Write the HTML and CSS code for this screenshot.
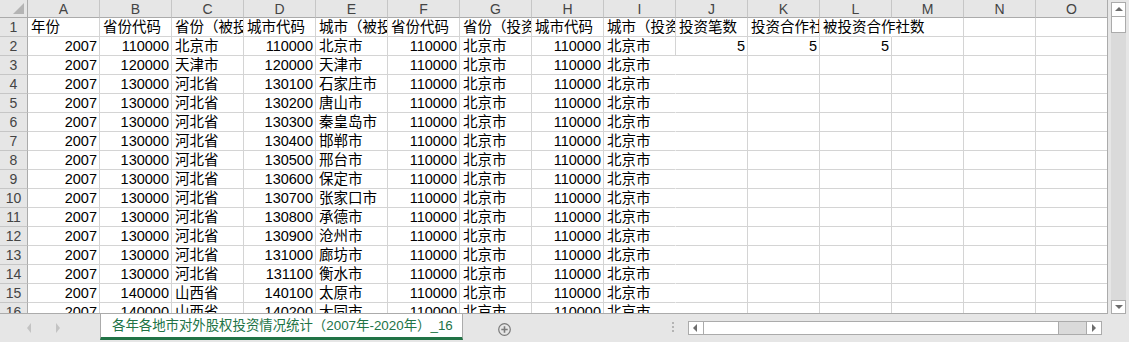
FILE: index.html
```html
<!DOCTYPE html>
<html lang="zh">
<head>
    <meta charset="UTF-8">
    <title>各年各地市对外股权投资情况统计</title>
    <link rel="stylesheet" href="styles.css">
</head>
<body>

<div class="main">
    <div class="sheet">
        <div class="row head">
            <div class="corner"><i></i></div>
        </div>
    </div>

    <div class="vscroll">
        <div class="btn up"><i></i></div>
        <div class="thumb"></div>
        <div class="track"></div>
        <div class="btn down"><i></i></div>
    </div>
</div>

<div class="bar">
    <div class="nav">
        <i class="prev"></i>
        <i class="next"></i>
    </div>
    <div class="tab">各年各地市对外股权投资情况统计（2007年-2020年）_16</div>
    <div class="add">
        <svg width="13" height="13" viewBox="0 0 13 13">
            <circle cx="6.5" cy="6.5" r="5.8" fill="none" stroke="#7a7a7a" stroke-width="1.2"/>
            <path d="M6.5 3.3v6.4M3.3 6.5h6.4" stroke="#7a7a7a" stroke-width="1.6"/>
        </svg>
    </div>
    <div class="dots"><i></i><i></i><i></i></div>
    <div class="hscroll">
        <div class="btn left"><i></i></div>
        <div class="hthumb"></div>
        <div class="htrack"></div>
        <div class="btn right"><i></i></div>
    </div>
</div>

<script>
    // 表头
    var letters = "ABCDEFGHIJKLMNO".split("");
    var titles = ["年份", "省份代码", "省份（被投资）", "城市代码", "城市（被投资）", "省份代码",
        "省份（投资）", "城市代码", "城市（投资）", "投资笔数", "投资合作社数", "被投资合作社数"];

    // 数据
    var data = [
        [2007, 110000, "北京市", 110000, "北京市", 110000, "北京市", 110000, "北京市", 5, 5, 5],
        [2007, 120000, "天津市", 120000, "天津市"],
        [2007, 130000, "河北省", 130100, "石家庄市"],
        [2007, 130000, "河北省", 130200, "唐山市"],
        [2007, 130000, "河北省", 130300, "秦皇岛市"],
        [2007, 130000, "河北省", 130400, "邯郸市"],
        [2007, 130000, "河北省", 130500, "邢台市"],
        [2007, 130000, "河北省", 130600, "保定市"],
        [2007, 130000, "河北省", 130700, "张家口市"],
        [2007, 130000, "河北省", 130800, "承德市"],
        [2007, 130000, "河北省", 130900, "沧州市"],
        [2007, 130000, "河北省", 131000, "廊坊市"],
        [2007, 130000, "河北省", 131100, "衡水市"],
        [2007, 140000, "山西省", 140100, "太原市"],
        [2007, 140000, "山西省", 140200, "大同市"]
    ];
    // 投资方都是北京
    for (var k = 1; k < data.length; k++) {
        data[k].push(110000, "北京市", 110000, "北京市");
    }

    var sheet = document.querySelector(".sheet");
    var head = document.querySelector(".row.head");

    letters.forEach(function (value) {
        var h = document.createElement("div");
        h.className = "col";
        h.textContent = value;
        head.appendChild(h);
    });

    var addRow = function (num, values) {
        var row = document.createElement("div");
        row.className = "row";
        var n = document.createElement("div");
        n.className = "num";
        n.textContent = num;
        row.appendChild(n);
        for (var i = 0; i < letters.length; i++) {
            var c = document.createElement("div");
            var v = values[i];
            c.className = "cell";
            if (typeof v === "number") {
                c.className += " right";
                c.textContent = v;
            } else if (v) {
                c.textContent = v;
                // 右边为空时文字溢出
                if (values[i + 1] === undefined) c.className += " spill";
            }
            row.appendChild(c);
        }
        sheet.appendChild(row);
    };

    addRow(1, titles);
    data.forEach(function (value, index) {
        addRow(index + 2, value);
    });
</script>

</body>
</html>
```

FILE: styles.css
```css
* {
    padding: 0;
    margin: 0;
    box-sizing: border-box;
}
body {
    width: 1129px;
    height: 342px;
    overflow: hidden;
    background: #e6e6e6;
    font-family: "Liberation Sans", "Noto Sans CJK SC", sans-serif;
}
.main {
    height: 314px;
    display: flex;
}
.sheet {
    width: 1108px;
    height: 314px;
    overflow: hidden;
    background: #fff;
    border-right: 1px solid #ababab;
    border-bottom: 1px solid #ababab;
}
.row {
    display: flex;
    height: 19px;
}
.row.head {
    height: 18px;
    background: #e6e6e6;
}
.corner {
    width: 28px;
    flex: none;
    position: relative;
    border-right: 1px solid #ababab;
    border-bottom: 1px solid #ababab;
}
.corner i {
    position: absolute;
    right: 3px;
    bottom: 3px;
    width: 0;
    height: 0;
    border-left: 11px solid transparent;
    border-bottom: 11px solid #b4b4b4;
}
.col {
    width: 72px;
    flex: none;
    text-align: center;
    font-size: 14px;
    line-height: 18px;
    color: #444;
    border-right: 1px solid #c6c6c6;
    border-bottom: 1px solid #ababab;
}
.num {
    width: 28px;
    flex: none;
    text-align: center;
    font-size: 14px;
    line-height: 19px;
    color: #444;
    background: #e6e6e6;
    border-right: 1px solid #ababab;
    border-bottom: 1px solid #c6c6c6;
}
.cell {
    width: 72px;
    flex: none;
    height: 19px;
    padding: 0 2px 0 3px;
    overflow: hidden;
    white-space: nowrap;
    font-size: 14.5px;
    line-height: 19px;
    color: #000;
    border-right: 1px solid #d4d4d4;
    border-bottom: 1px solid #d4d4d4;
}
.cell.right {
    text-align: right;
}
.cell.spill {
    overflow: visible;
    border-right-color: transparent;
}

/* 竖向滚动条 */
.vscroll {
    width: 21px;
    padding: 2px 3px 0 3px;
    display: flex;
    flex-direction: column;
}
.vscroll .btn {
    height: 15px;
    background: #fff;
    border: 1px solid #ababab;
    position: relative;
}
.vscroll .thumb {
    height: 16px;
    background: #fff;
    border: 1px solid #ababab;
    border-top: none;
}
.vscroll .track {
    flex: 1;
    background: #dadada;
}
.vscroll .down {
    height: 14px;
}
.btn i {
    position: absolute;
    width: 0;
    height: 0;
}
.up i {
    left: 3px;
    top: 4px;
    border-left: 4px solid transparent;
    border-right: 4px solid transparent;
    border-bottom: 4px solid #6d6d6d;
}
.down i {
    left: 3px;
    top: 4px;
    border-left: 4px solid transparent;
    border-right: 4px solid transparent;
    border-top: 4px solid #6d6d6d;
}

/* 底部工作表栏 */
.bar {
    height: 28px;
    display: flex;
    align-items: flex-start;
}
.nav {
    width: 100px;
    height: 28px;
    position: relative;
}
.nav i {
    position: absolute;
    top: 9px;
    width: 0;
    height: 0;
    border-top: 5px solid transparent;
    border-bottom: 5px solid transparent;
}
.nav .prev {
    left: 27px;
    border-right: 4px solid #c3c3c3;
}
.nav .next {
    left: 56px;
    border-left: 4px solid #c3c3c3;
}
.tab {
    width: 363px;
    height: 26px;
    padding-left: 11px;
    background: #fff;
    border-left: 1px solid #ababab;
    border-right: 1px solid #ababab;
    border-bottom: 3px solid #217346;
    color: #217346;
    font-size: 13.4px;
    line-height: 23px;
    white-space: nowrap;
    overflow: hidden;
}
.add {
    margin-left: 35px;
    padding-top: 8px;
}
.dots {
    margin-left: 161px;
    padding-top: 8px;
    width: 3px;
    display: flex;
    flex-direction: column;
    gap: 2px;
}
.dots i {
    width: 2px;
    height: 2px;
    background: #b4b4b4;
}
.hscroll {
    margin-left: 13px;
    margin-top: 7px;
    width: 414px;
    height: 14px;
    display: flex;
    border: 1px solid #ababab;
}
.hscroll .btn {
    width: 15px;
    background: #fff;
    position: relative;
}
.hscroll .left {
    border-right: 1px solid #ababab;
}
.hscroll .right {
    border-left: 1px solid #ababab;
}
.hthumb {
    width: 355px;
    background: #fff;
    border-right: 1px solid #ababab;
}
.htrack {
    flex: 1;
    background: #dadada;
}
.left i {
    left: 4px;
    top: 2px;
    border-top: 4px solid transparent;
    border-bottom: 4px solid transparent;
    border-right: 4px solid #6d6d6d;
}
.right i {
    left: 5px;
    top: 2px;
    border-top: 4px solid transparent;
    border-bottom: 4px solid transparent;
    border-left: 4px solid #6d6d6d;
}
```
